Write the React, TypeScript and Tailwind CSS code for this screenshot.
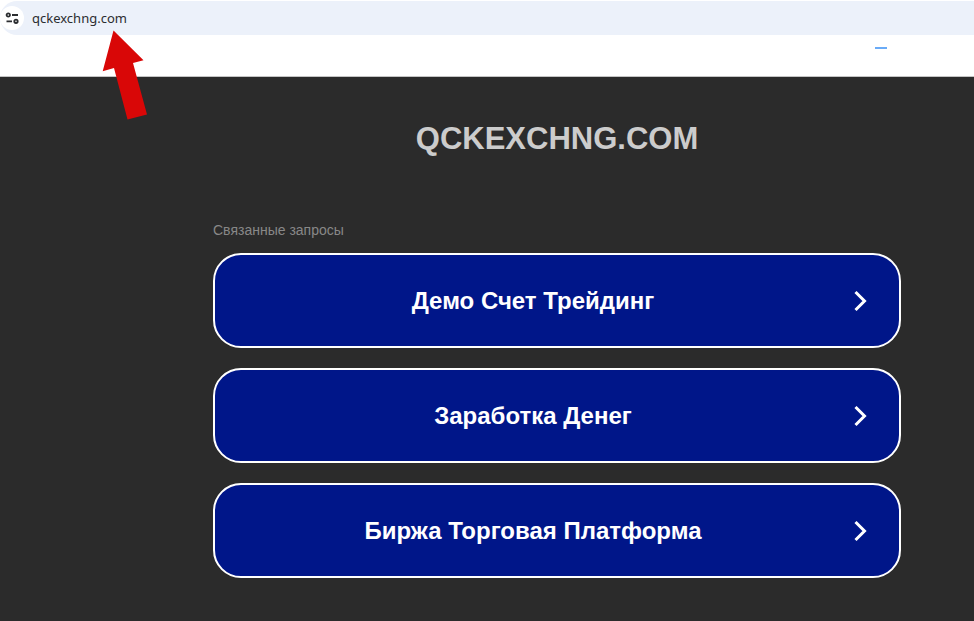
import React from "react";

const searches = [
  { id: 1, title: "Демо Счет Трейдинг" },
  { id: 2, title: "Заработка Денег" },
  { id: 3, title: "Биржа Торговая Платформа" },
];

function SiteSettingsIcon() {
  return (
    <svg
      width="14"
      height="14"
      viewBox="0 0 14 14"
      fill="none"
      stroke="#2b2d30"
      strokeWidth="1.8"
      aria-hidden="true"
    >
      <circle cx="3.3" cy="4" r="1.7" />
      <path d="M7 4h6M1.500 10.300h5.500" />
      <circle cx="11" cy="10.300" r="1.700" />
    </svg>
  );
}

function AddressBar() {
  return (
    <header className="relative h-[77px] border-b border-[#c4c4c4] bg-white pt-px">
      <div className="flex h-[34px] items-center rounded-l-full bg-[#ecf1fa]">
        <button
          type="button"
          aria-label="Site settings"
          className="flex h-6 w-6 items-center justify-center rounded-full bg-white"
        >
          <SiteSettingsIcon />
        </button>
        <input
          type="text"
          aria-label="Address"
          defaultValue="qckexchng.com"
          className="ml-2 flex-1 bg-transparent font-['Noto_Sans',sans-serif] text-[13px] leading-5 text-[#2b2d30] outline-none"
        />
      </div>
      <div className="mt-3 mr-[87px] ml-auto h-0.5 w-3 bg-[#6aabf7]" />
      {/* arrow pointing at the address */}
      <svg
        className="absolute top-[30px] left-[102px]"
        width="46"
        height="90"
        viewBox="0 0 46 90"
        aria-hidden="true"
      >
        <path
          d="M11.500 0.500L41.500 30.300L31 33L45 84.500L25.500 89.500L12 38L0.700 41.200Z"
          fill="#d90707"
        />
      </svg>
    </header>
  );
}

function SearchLink({ title }: { title: string }) {
  return (
    <a
      href="#"
      className="flex h-[95px] items-center rounded-[28px] border-2 border-white bg-[#001689] px-7 text-2xl font-bold text-white"
    >
      <span className="flex-1 pr-7 text-center">{title}</span>
      <svg
        width="20"
        height="24"
        viewBox="0 0 20 24"
        fill="none"
        stroke="currentColor"
        strokeWidth="3"
        aria-hidden="true"
      >
        <path d="M4.500 3L13.500 12L4.500 21" />
      </svg>
    </a>
  );
}

export default function App() {
  return (
    <div className="flex min-h-screen flex-col bg-[#2b2b2b] font-['Liberation_Sans',sans-serif]">
      <AddressBar />
      <main className="pt-10 pr-[73px] pb-10 pl-[213px]">
        <h1 className="text-center text-[31px] leading-[44px] font-bold text-[#cccccc]">
          QCKEXCHNG.COM
        </h1>
        <p className="mt-[59px] mb-[13px] text-sm leading-5 text-[#888888]">
          Связанные запросы
        </p>
        <nav className="flex flex-col gap-5">
          {searches.map((search) => (
            <SearchLink key={search.id} title={search.title} />
          ))}
        </nav>
      </main>
    </div>
  );
}
